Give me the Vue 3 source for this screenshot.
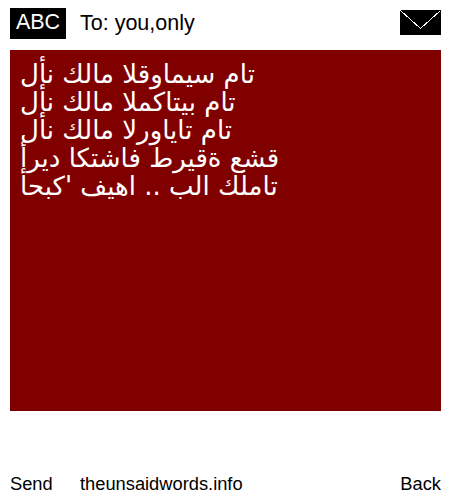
<template>
  <div class="phone">
    <header class="top">
      <div class="mode">ABC</div>
      <div class="to">To: you,only</div>
      <svg class="envelope" width="41" height="25" viewBox="0 0 41 25" shape-rendering="crispEdges">
        <rect width="41" height="25" fill="#000" />
        <path d="M0.5 0.5 L20.5 18.5 L40.5 0.5" fill="none" stroke="#fff" stroke-width="1" />
      </svg>
    </header>
    <main class="message">
      <div v-for="line in lines" :key="line" class="line">{{ line }}</div>
    </main>
    <footer class="bottom">
      <span class="send">Send</span>
      <span class="site">theunsaidwords.info</span>
      <span>Back</span>
    </footer>
  </div>
</template>

<script setup>
const lines = [
  'لأن كلام القواميس مات',
  'لأن كلام المكاتيب مات',
  'لأن كلام الروايات مات',
  'أريد اكتشاف طريقة عشق',
  "أحبك' فيها .. بلا كلمات"
]
</script>

<style scoped>
.phone {
  width: 450px;
  height: 500px;
  box-sizing: border-box;
  padding: 8px 9px 0 10px;
  background: #fff;
  color: #000;
  font-family: "Liberation Sans", Arial, sans-serif;
  font-size: 18.3px;
  display: flex;
  flex-direction: column;
}

.top {
  height: 31px;
  display: flex;
  align-items: center;
}

.mode {
  width: 56px;
  height: 31px;
  line-height: 29px;
  background: #000;
  color: #fff;
  text-align: center;
  font-size: 21.5px;
}

.to {
  margin-left: 14px;
  flex: 1;
  font-size: 21.5px;
}

.envelope {
  display: block;
  margin-top: -2px;
}

.message {
  margin-top: 11px;
  height: 361px;
  box-sizing: border-box;
  padding: 10px;
  background: #800000;
  color: #fff;
  font-family: "DejaVu Sans", sans-serif;
  font-size: 26px;
  line-height: 28px;
}

.line {
  direction: ltr;
  unicode-bidi: bidi-override;
  white-space: nowrap;
}

.bottom {
  margin-top: 62px;
  display: flex;
  line-height: 21px;
}

.send {
  width: 70px;
}

.site {
  flex: 1;
}
</style>
